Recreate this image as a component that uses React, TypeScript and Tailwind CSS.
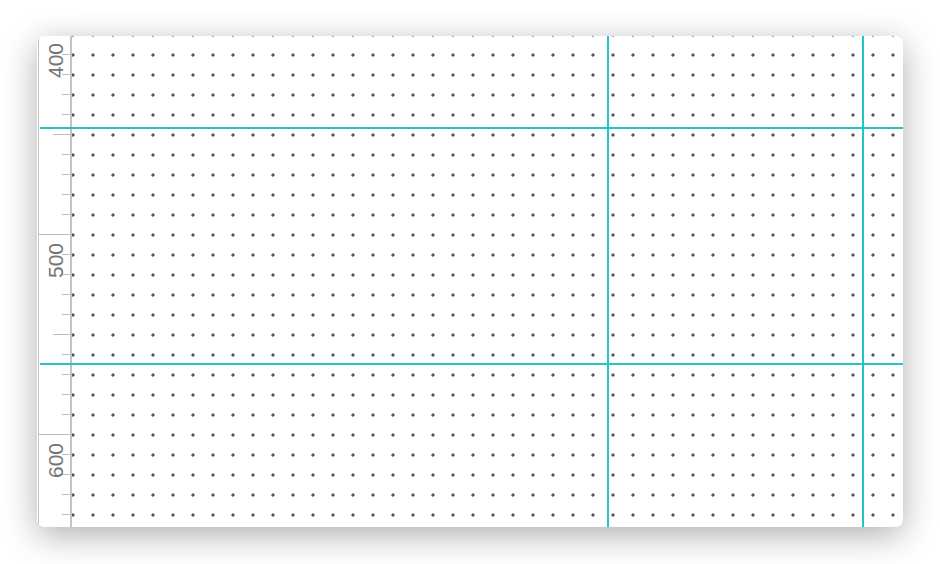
import React from 'react';

// ruler values: 400 sits 2px above the card's top edge, 2px per unit
const TICKS = Array.from({ length: 26 }, (_, k) => 400 + k * 10);
const LABELS = [400, 500, 600];

function tickY(v: number) {
  return -2 + (v - 400) * 2;
}

function Ruler() {
  return (
    <div className="w-[35px] h-full shrink-0 bg-white">
      <svg width="35" height="491" viewBox="0 0 35 491">
        <rect x="1" y="0" width="1" height="491" fill="#c4c4c4" />
        <rect x="33" y="0" width="2" height="491" fill="#c2c2c2" />
        {TICKS.map((v) => {
          const x = v % 100 === 0 ? 2 : v % 50 === 0 ? 16 : 25;
          return <rect key={v} x={x} y={tickY(v)} width={35 - x} height="1" fill="#bdbdbd" />;
        })}
        {LABELS.map((v) => (
          <text
            key={v}
            transform={`translate(25.5, ${tickY(v) + 9}) rotate(-90)`}
            textAnchor="end"
            fontSize="21"
            fill="#757575"
            fontFamily="'Liberation Sans', Arial, sans-serif"
          >
            {v}
          </text>
        ))}
      </svg>
    </div>
  );
}

export default function App() {
  return (
    <div className="w-[940px] h-[564px] bg-white pt-[36px] pl-[37px]">
      <div className="relative w-[866px] h-[491px] rounded-lg overflow-hidden bg-white shadow-[0_8px_34px_rgba(0,0,0,0.32)] flex">
        <Ruler />
        <div className="flex-1 h-full bg-white bg-[radial-gradient(circle,#555555_1.3px,transparent_1.9px)] bg-[size:20px_20px] bg-[position:-9px_9px]" />

        {/* guides */}
        <div className="absolute left-[3px] right-0 top-[91px] h-[2px] bg-[#22c4c4]" />
        <div className="absolute left-[3px] right-0 top-[327px] h-[2px] bg-[#22c4c4]" />
        <div className="absolute top-0 bottom-0 left-[570px] w-[2px] bg-[#22c4c4]" />
        <div className="absolute top-0 bottom-0 left-[825px] w-[2px] bg-[#22c4c4]" />
      </div>
    </div>
  );
}
